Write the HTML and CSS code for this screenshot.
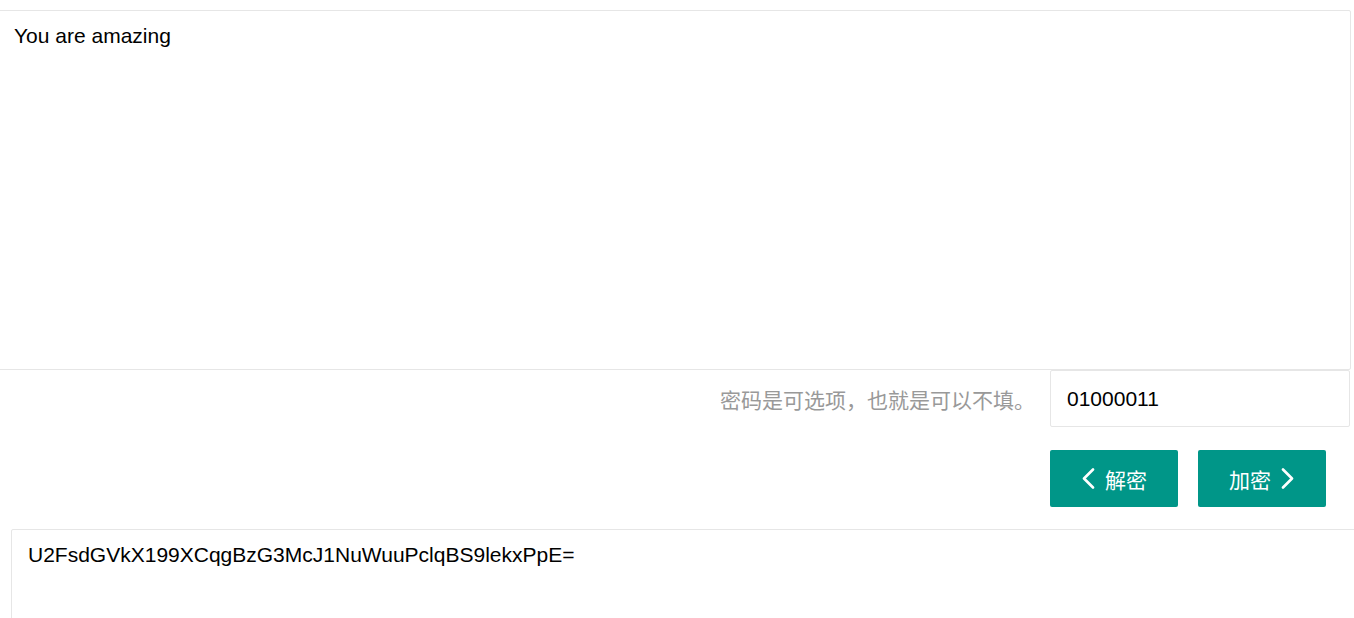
FILE: index.html
```html
<!DOCTYPE html>
<html>
<head>
    <meta charset="UTF-8">
    <title>加密解密</title>
    <link rel="stylesheet" href="styles.css">
</head>
<body>
    <div class="page">
        <textarea class="text-box source" id="source">You are amazing</textarea>

        <div class="key-row">
            <span class="key-hint">密码是可选项，也就是可以不填。</span>
            <input class="key-input" type="text" id="key" value="01000011">
        </div>

        <div class="actions">
            <button class="btn">
                <svg class="chev" width="14" height="21" viewBox="0 0 14 21"><path d="M12 1.5 L3 10.5 L12 19.5" /></svg>
                <span>解密</span>
            </button>
            <button class="btn">
                <span>加密</span>
                <svg class="chev" width="14" height="21" viewBox="0 0 14 21"><path d="M2 1.5 L11 10.5 L2 19.5" /></svg>
            </button>
        </div>

        <textarea class="text-box result" id="result">U2FsdGVkX199XCqgBzG3McJ1NuWuuPclqBS9lekxPpE=</textarea>
    </div>
</body>
</html>
```

FILE: styles.css
```css
html,
body {
    margin: 0;
    overflow: hidden;
    background: #fff;
}

body {
    font-family: "Liberation Sans", "Noto Sans CJK SC", sans-serif;
    font-size: 21px;
    color: #000;
}

.page {
    width: 1354px;
    height: 618px;
    overflow: hidden;
    padding-top: 10px;
    box-sizing: border-box;
}

.text-box {
    display: block;
    box-sizing: border-box;
    border: 1px solid #e6e6e6;
    border-radius: 2px;
    font-family: "Liberation Sans", "Noto Sans CJK SC", sans-serif;
    font-size: 21px;
    line-height: 24px;
    color: #000;
    resize: none;
    outline: none;
    background: #fff;
}

.source {
    margin-left: -2px;
    width: 1353px;
    height: 360px;
    padding: 13px 15px;
}

.result {
    margin: 22px 0 0 11px;
    width: 1400px;
    height: 120px;
    padding: 13px 16px;
}

.key-row {
    display: flex;
    justify-content: flex-end;
    align-items: center;
    gap: 15px;
    margin-right: 4px;
}

.key-hint {
    font-family: "Noto Sans CJK SC", sans-serif;
    font-size: 21px;
    color: #999;
}

.key-input {
    box-sizing: border-box;
    width: 300px;
    height: 57px;
    padding: 0 16px;
    border: 1px solid #e6e6e6;
    border-radius: 2px;
    font-family: "Liberation Sans", sans-serif;
    font-size: 21px;
    color: #000;
    outline: none;
}

.actions {
    display: flex;
    justify-content: flex-end;
    gap: 20px;
    margin: 23px 28px 0 0;
}

.btn {
    display: flex;
    align-items: center;
    justify-content: center;
    gap: 10px;
    width: 128px;
    height: 57px;
    border: none;
    border-radius: 2px;
    background-color: #009688;
    color: #fff;
    font-family: "Noto Sans CJK SC", sans-serif;
    font-size: 21px;
    cursor: pointer;
}

.chev path {
    fill: none;
    stroke: #fff;
    stroke-width: 2.6;
    stroke-linecap: round;
    stroke-linejoin: round;
}
```
